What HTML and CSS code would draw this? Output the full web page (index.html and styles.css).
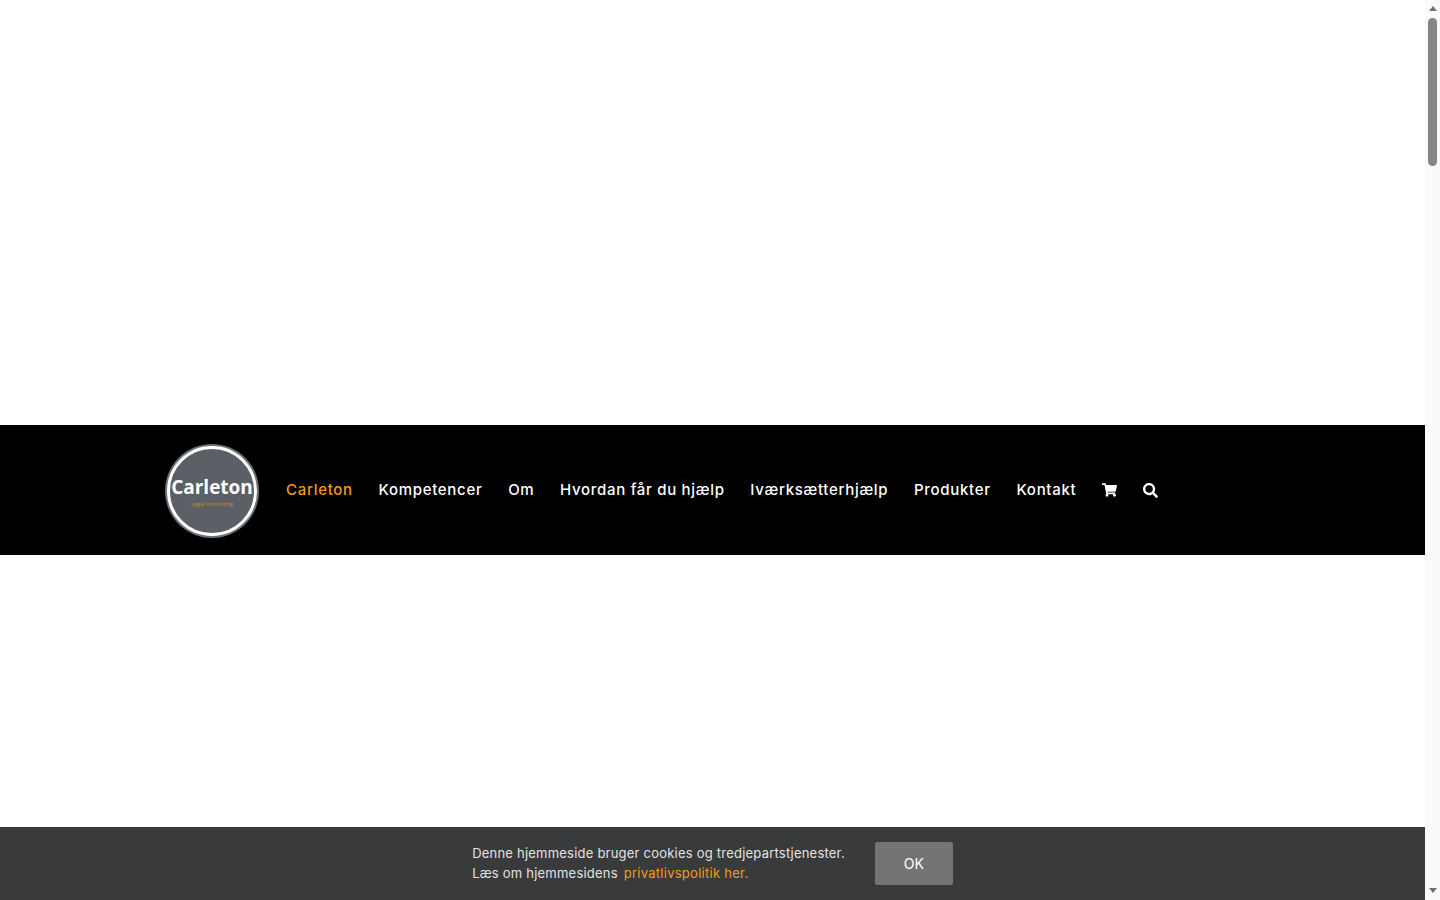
FILE: index.html
```html
<!doctype html>
<html lang="da">
<head>

    <title>Carleton Legal Consulting</title>

    <link rel="stylesheet" href="styles.css">

</head>
<body>

    <div class="Page">

        <div class="Content">

            <div class="Slider"></div>

            <!-- main menu -->
            <header class="Header">
                <a class="Logo" href="#">
                    <span class="LogoName">Carleton</span>
                    <span class="LogoSub">Legal Consulting</span>
                </a>
                <nav class="Nav">
                    <a class="NavLink NavLink-active" href="#">Carleton</a>
                    <a class="NavLink" href="#">Kompetencer</a>
                    <a class="NavLink" href="#">Om</a>
                    <a class="NavLink" href="#">Hvordan får du hjælp</a>
                    <a class="NavLink" href="#">Iværksætterhjælp</a>
                    <a class="NavLink" href="#">Produkter</a>
                    <a class="NavLink" href="#">Kontakt</a>
                    <a class="NavIcon" href="#">
                        <svg width="15" height="14" viewBox="0 0 576 512"><path fill="currentColor" d="M528.12 301.319l47.273-208C578.806 78.301 567.391 64 551.99 64H159.208l-9.166-44.81C147.758 8.021 137.93 0 126.529 0H24C10.745 0 0 10.745 0 24v16c0 13.255 10.745 24 24 24h69.883l70.248 343.435C147.325 417.1 136 435.222 136 456c0 30.928 25.072 56 56 56s56-25.072 56-56c0-15.674-6.447-29.835-16.824-40h209.647C430.447 426.165 424 440.326 424 456c0 30.928 25.072 56 56 56s56-25.072 56-56c0-22.172-12.888-41.332-31.579-50.405l5.517-24.276c3.413-15.018-8.002-29.319-23.403-29.319H218.117l-6.545-32h293.145c11.206 0 20.92-7.754 23.403-18.681z"/></svg>
                    </a>
                    <a class="NavIcon" href="#">
                        <svg width="15" height="15" viewBox="0 0 512 512"><path fill="currentColor" d="M505 442.7L405.3 343c-4.5-4.5-10.6-7-17-7H372c27.6-35.3 44-79.7 44-128C416 93.1 322.9 0 208 0S0 93.1 0 208s93.1 208 208 208c48.3 0 92.7-16.4 128-44v16.3c0 6.4 2.5 12.5 7 17l99.7 99.7c9.4 9.4 24.6 9.4 33.9 0l28.3-28.3c9.4-9.4 9.4-24.6.1-34zM208 336c-70.7 0-128-57.2-128-128 0-70.7 57.2-128 128-128 70.7 0 128 57.2 128 128 0 70.7-57.2 128-128 128z"/></svg>
                    </a>
                </nav>
            </header>

            <div class="Filler"></div>

            <!-- cookie notice -->
            <div class="Cookie">
                <p class="CookieText">
                    Denne hjemmeside bruger cookies og tredjepartstjenester.<br>
                    Læs om hjemmesidens <a class="CookieLink" href="#">privatlivspolitik her.</a>
                </p>
                <button class="CookieButton">OK</button>
            </div>

        </div>

        <!-- scrollbar of the window -->
        <div class="Scrollbar">
            <div class="ScrollUp"></div>
            <div class="ScrollThumb"></div>
            <div class="ScrollTrack"></div>
            <div class="ScrollDown"></div>
        </div>

    </div>

</body>
</html>
```

FILE: styles.css
```css
*, *:before, *:after {
    box-sizing: border-box;
    margin: 0;
    padding: 0;
}

html, body {
    height: 100%;
    overflow: hidden;
    background: #fff;
}

body {
    font-family: Inter, "Noto Sans", sans-serif;
}

a {
    text-decoration: none;
}

.Page {
    display: flex;
    height: 900px;
}

.Content {
    display: flex;
    flex: 1;
    flex-direction: column;
    min-width: 0;
}

.Slider {
    height: 425px;
}

.Filler {
    flex: 1;
}

.Header {
    display: flex;
    align-items: center;
    height: 130px;
    padding-left: 167px;
    background: #000;
}

.Logo {
    display: flex;
    flex-direction: column;
    align-items: center;
    justify-content: center;
    flex-shrink: 0;
    width: 90px;
    height: 90px;
    margin-top: 1px;
    padding-top: 1px;
    border: 3px solid #fff;
    border-radius: 50%;
    background: #5a6066;
    box-shadow: 0 0 0 2px #6d7176;
    color: #fff;
}

.LogoName {
    font-family: "Open Sans", sans-serif;
    font-size: 19px;
    font-weight: 700;
    line-height: 26px;
}

.LogoSub {
    font-family: "Open Sans", sans-serif;
    font-size: 5.5px;
    line-height: 8px;
    color: #d08a22;
}

.Nav {
    display: flex;
    align-items: center;
    gap: 25.7px;
    margin-left: 29px;
}

.NavLink {
    color: #fff;
    font-size: 15px;
    font-weight: 500;
    letter-spacing: 0.7px;
    line-height: 20px;
    white-space: nowrap;
}

.NavLink-active {
    color: #f09a25;
}

.NavIcon {
    display: flex;
    color: #fff;
}

.Cookie {
    display: flex;
    align-items: center;
    justify-content: center;
    gap: 30px;
    height: 73px;
    background: #393a3c;
}

.CookieText {
    margin-top: -2px;
    color: #e2e2e2;
    font-size: 13px;
    letter-spacing: 0.22px;
    line-height: 20px;
}

.CookieLink {
    margin-left: 2px;
    color: #f09a25;
    letter-spacing: 0.27px;
}

.CookieButton {
    width: 78px;
    height: 43px;
    border: 0;
    border-radius: 2px;
    background: #747474;
    color: #fff;
    font-family: inherit;
    font-size: 14px;
}

.Scrollbar {
    display: flex;
    flex-direction: column;
    align-items: center;
    flex-shrink: 0;
    width: 15px;
    background: #fafafa;
}

.ScrollUp, .ScrollDown {
    width: 0;
    height: 0;
    border-left: 4.5px solid transparent;
    border-right: 4.5px solid transparent;
}

.ScrollUp {
    margin-top: 6px;
    border-bottom: 5px solid #707070;
}

.ScrollDown {
    margin-bottom: 7px;
    border-top: 5px solid #707070;
}

.ScrollThumb {
    width: 9px;
    height: 148px;
    margin-top: 7px;
    border-radius: 5px;
    background: #858585;
}

.ScrollTrack {
    flex: 1;
}
```
